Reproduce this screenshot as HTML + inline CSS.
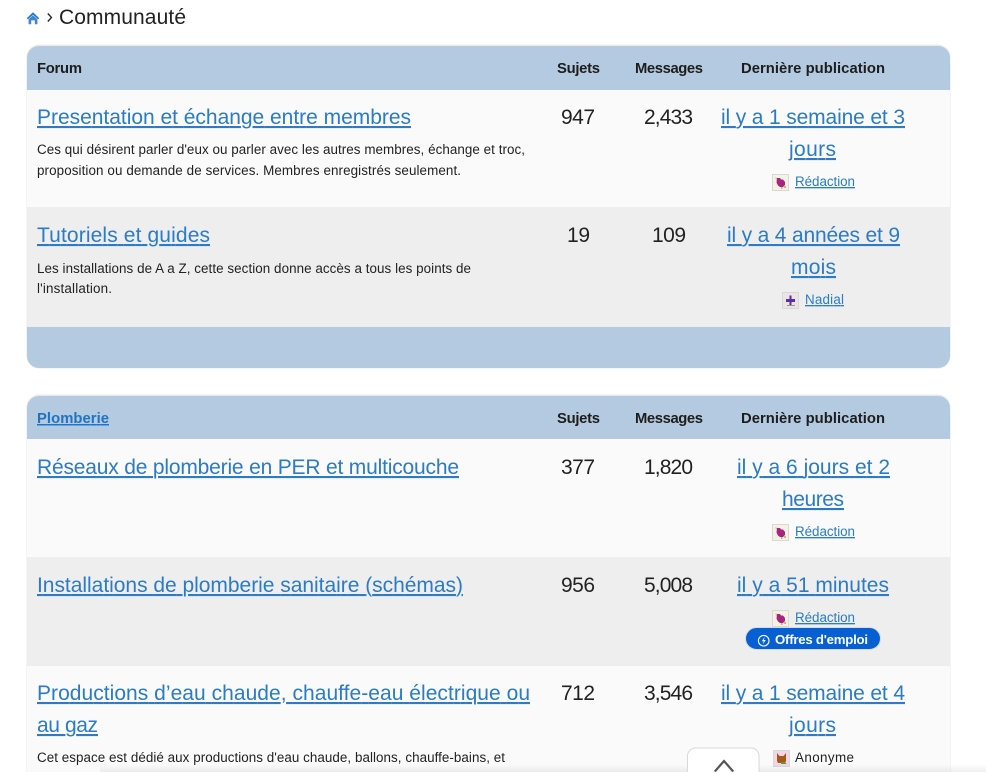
<!DOCTYPE html>
<html lang="fr"><head><meta charset="utf-8"><title>Communauté</title>
<style>
html,body{margin:0;padding:0;background:#fff;width:986px;height:772px;overflow:hidden}
svg{display:block}
text{font-family:"Liberation Sans",sans-serif;fill:#222;white-space:pre}
.t{font-size:21px;fill:#2b7bc6;text-decoration:underline;text-decoration-thickness:2px;text-underline-offset:3px}
.n{font-size:21px;fill:#222}
.h{font-size:14.8px;font-weight:bold;fill:#1d1d1d}
.d{font-size:13.4px;fill:#222}
.s{font-size:13.4px;fill:#2b7bc6;text-decoration:underline}
</style></head><body>
<svg width="986" height="772" viewBox="0 0 986 772" xmlns="http://www.w3.org/2000/svg">
<defs>
<linearGradient id="fade" x1="0" y1="0" x2="0" y2="1"><stop offset="0" stop-color="#000" stop-opacity="0"/><stop offset="1" stop-color="#000" stop-opacity=".06"/></linearGradient>
<g id="av1"><rect x=".5" y=".5" width="16" height="16" fill="#f5f2e4" stroke="#d8d8d8"/><path d="M5 4h3l1 1.500h2l2 2.500v3l-2 2H8l-2-1.500-1.500-3z" fill="#a8247f"/><path d="M12 11l2 1v2h-2zM9 13h1.500v2H9zM3.500 3l1.500 1-1 2z" fill="#c9b28c"/></g>
<g id="av2"><rect x=".5" y=".5" width="16" height="16" fill="#e8e6e2" stroke="#d8d8d8"/><path d="M7.500 3.500h2v3.500h3.500v3H9.500v3h-2v-3H4V7h3.500z" fill="#5b2bb0"/><path d="M5 13h8v1H5z" fill="#9a9a80"/></g>
<g id="av3"><rect x=".5" y=".5" width="16" height="16" fill="#f2d6e6" stroke="#d8d8d8"/><path d="M4 3l2.500 3h4L13 3v8l-1 2H5l-1-2z" fill="#a4581c"/><path d="M8 12h4l1.500 2H8z" fill="#4f9f3a"/></g>
</defs>

<!-- breadcrumb -->
<path d="M33 12.300L26.700 18.200 28 19.300 33 14.800 38 19.300 39.300 18.200 Z" fill="#2b78c4"/>
<path d="M28.600 19.300L33 15.300 37.400 19.300V24.300H34.800V20.400H31.200V24.300H28.600Z" fill="#3d88d0"/>
<path d="M47.800 13.500L51.500 17.500 47.800 21.500" fill="none" stroke="#222" stroke-width="1.300"/>
<text x="59" y="24" font-size="21" textLength="127" lengthAdjust="spacing" fill="#1c1c1c">Communauté</text>

<!-- panel 1 -->
<rect x="26.500" y="44.500" width="924" height="324" rx="13" fill="#e9e9e9"/>
<rect x="27" y="46" width="923" height="322" rx="12" fill="#b3cae0"/>
<rect x="27" y="90" width="923" height="117" fill="#fafafa"/>
<rect x="27" y="207" width="923" height="120" fill="#eeeeee"/>

<text class="h" x="37" y="73" textLength="45" lengthAdjust="spacing">Forum</text>
<text class="h" x="557" y="73" textLength="43" lengthAdjust="spacing">Sujets</text>
<text class="h" x="635" y="73" textLength="68" lengthAdjust="spacing">Messages</text>
<text class="h" x="741" y="73" textLength="144" lengthAdjust="spacing">Dernière publication</text>

<text class="t" x="37" y="124" textLength="374" lengthAdjust="spacing">Presentation et échange entre membres</text>
<text class="d" x="37" y="154" textLength="488" lengthAdjust="spacing">Ces qui désirent parler d'eux ou parler avec les autres membres, échange et troc,</text>
<text class="d" x="37" y="175" textLength="424" lengthAdjust="spacing">proposition ou demande de services. Membres enregistrés seulement.</text>
<text class="n" x="561" y="124" textLength="34" lengthAdjust="spacing">947</text>
<text class="n" x="644" y="124" textLength="49" lengthAdjust="spacing">2,433</text>
<text class="t" x="721" y="124" textLength="184" lengthAdjust="spacing">il y a 1 semaine et 3</text>
<text class="t" x="789" y="156" textLength="47" lengthAdjust="spacing">jours</text>
<use href="#av1" x="772" y="174"/>
<text class="s" x="795" y="186" textLength="60" lengthAdjust="spacing">Rédaction</text>

<text class="t" x="37" y="242" textLength="173" lengthAdjust="spacing">Tutoriels et guides</text>
<text class="d" x="37" y="273" textLength="434" lengthAdjust="spacing">Les installations de A a Z, cette section donne accès a tous les points de</text>
<text class="d" x="37" y="293" textLength="75" lengthAdjust="spacing">l'installation.</text>
<text class="n" x="567" y="242" textLength="23" lengthAdjust="spacing">19</text>
<text class="n" x="652" y="242" textLength="34" lengthAdjust="spacing">109</text>
<text class="t" x="727" y="242" textLength="173" lengthAdjust="spacing">il y a 4 années et 9</text>
<text class="t" x="791" y="274" textLength="45" lengthAdjust="spacing">mois</text>
<use href="#av2" x="782" y="292"/>
<text class="s" x="805" y="304" textLength="39" lengthAdjust="spacing">Nadial</text>

<!-- panel 2 -->
<rect x="26.500" y="394.500" width="924" height="400" rx="13" fill="#e9e9e9"/>
<rect x="27" y="396" width="923" height="400" rx="12" fill="#fafafa"/>
<path d="M27 439V408a12 12 0 0 1 12-12H938a12 12 0 0 1 12 12V439Z" fill="#b3cae0"/>
<rect x="27" y="557" width="923" height="109" fill="#eeeeee"/>

<text class="h" x="37" y="423" textLength="72" lengthAdjust="spacing" style="fill:#2173c2;text-decoration:underline">Plomberie</text>
<text class="h" x="557" y="423" textLength="43" lengthAdjust="spacing">Sujets</text>
<text class="h" x="635" y="423" textLength="68" lengthAdjust="spacing">Messages</text>
<text class="h" x="741" y="423" textLength="144" lengthAdjust="spacing">Dernière publication</text>

<text class="t" x="37" y="474" textLength="422" lengthAdjust="spacing">Réseaux de plomberie en PER et multicouche</text>
<text class="n" x="561" y="474" textLength="34" lengthAdjust="spacing">377</text>
<text class="n" x="644" y="474" textLength="49" lengthAdjust="spacing">1,820</text>
<text class="t" x="737" y="474" textLength="153" lengthAdjust="spacing">il y a 6 jours et 2</text>
<text class="t" x="782" y="506" textLength="62" lengthAdjust="spacing">heures</text>
<use href="#av1" x="772" y="524"/>
<text class="s" x="795" y="536" textLength="60" lengthAdjust="spacing">Rédaction</text>

<text class="t" x="37" y="592" textLength="426" lengthAdjust="spacing">Installations de plomberie sanitaire (schémas)</text>
<text class="n" x="561" y="592" textLength="34" lengthAdjust="spacing">956</text>
<text class="n" x="644" y="592" textLength="49" lengthAdjust="spacing">5,008</text>
<text class="t" x="737" y="592" textLength="152" lengthAdjust="spacing">il y a 51 minutes</text>
<use href="#av1" x="772" y="610"/>
<text class="s" x="795" y="622" textLength="60" lengthAdjust="spacing">Rédaction</text>

<rect x="745.500" y="627.500" width="135" height="22" rx="11" fill="#0660d4" stroke="#d5dbe4"/>
<circle cx="763.700" cy="640.700" r="5.300" fill="none" stroke="#fff" stroke-width="1.100"/>
<path d="M764.800 636.800L761.800 641.200H763.800L762.600 644.500 765.800 640H763.700Z" fill="#fff"/>
<text x="775" y="644" font-size="13.200" font-weight="bold" textLength="93" lengthAdjust="spacing" style="fill:#fff">Offres d'emploi</text>

<text class="t" x="37" y="700" textLength="493" lengthAdjust="spacing">Productions d’eau chaude, chauffe-eau électrique ou</text>
<text class="t" x="37" y="732" textLength="61" lengthAdjust="spacing">au gaz</text>
<text class="d" x="37" y="762" textLength="468" lengthAdjust="spacing">Cet espace est dédié aux productions d'eau chaude, ballons, chauffe-bains, et</text>
<text class="n" x="561" y="700" textLength="34" lengthAdjust="spacing">712</text>
<text class="n" x="644" y="700" textLength="49" lengthAdjust="spacing">3,546</text>
<text class="t" x="721" y="700" textLength="184" lengthAdjust="spacing">il y a 1 semaine et 4</text>
<text class="t" x="789" y="732" textLength="47" lengthAdjust="spacing">jours</text>
<use href="#av3" x="773" y="750"/>
<text x="795" y="762" font-size="13.400" textLength="59" lengthAdjust="spacing">Anonyme</text>

<!-- bottom shadow -->
<rect x="100" y="764" width="886" height="8" fill="url(#fade)"/>

<!-- back to top -->
<path d="M687.500 773V756a8 8 0 0 1 8-8H751a8 8 0 0 1 8 8V773Z" fill="#fff" stroke="#d8d8d8"/>
<path d="M714.800 771.500L724 761 733.200 771.500" fill="none" stroke="#555" stroke-width="2.200"/>
</svg>
</body></html>
